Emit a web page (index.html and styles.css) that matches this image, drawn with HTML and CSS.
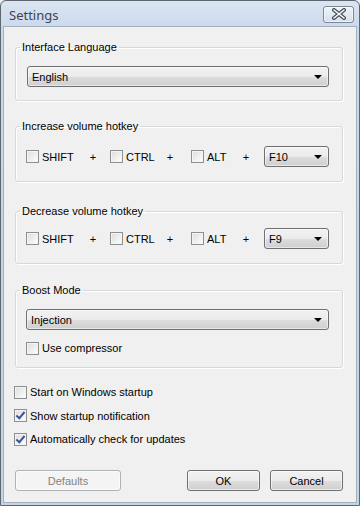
FILE: index.html
```html
<!DOCTYPE html>
<html lang="en">
<head>
    <meta charset="UTF-8">
    <meta name="viewport" content="width=device-width, initial-scale=1.0">
    <title>Settings</title>
    <link rel="stylesheet" href="styles.css">
</head>
<body>
    <div class="window">
        <!-- Title bar with caption and close button -->
        <div class="title-bar">
            <div class="title">Settings</div>
            <div class="close-btn">
                <svg width="18" height="12" viewBox="0 0 18 12">
                    <path d="M4 2 L14 10 M14 2 L4 10" stroke="#4a4f55" stroke-width="4" stroke-linecap="round"/>
                    <path d="M4 2 L14 10 M14 2 L4 10" stroke="#ffffff" stroke-width="1.6" stroke-linecap="round"/>
                </svg>
            </div>
        </div>

        <!-- Client area -->
        <div class="client">
            <fieldset class="group group-lang">
                <legend>Interface Language</legend>
                <div class="combo combo-wide"><span>English</span><i class="arrow"></i></div>
            </fieldset>

            <fieldset class="group group-hotkey group-increase">
                <legend>Increase volume hotkey</legend>
                <div class="hotkey-row">
                    <label class="check key-shift"><span class="box"></span>SHIFT</label>
                    <span class="plus">+</span>
                    <label class="check key-ctrl"><span class="box"></span>CTRL</label>
                    <span class="plus">+</span>
                    <label class="check key-alt"><span class="box"></span>ALT</label>
                    <span class="plus">+</span>
                    <div class="combo combo-key"><span>F10</span><i class="arrow"></i></div>
                </div>
            </fieldset>

            <fieldset class="group group-hotkey group-decrease">
                <legend>Decrease volume hotkey</legend>
                <div class="hotkey-row">
                    <label class="check key-shift"><span class="box"></span>SHIFT</label>
                    <span class="plus">+</span>
                    <label class="check key-ctrl"><span class="box"></span>CTRL</label>
                    <span class="plus">+</span>
                    <label class="check key-alt"><span class="box"></span>ALT</label>
                    <span class="plus">+</span>
                    <div class="combo combo-key"><span>F9</span><i class="arrow"></i></div>
                </div>
            </fieldset>

            <fieldset class="group group-boost">
                <legend>Boost Mode</legend>
                <div class="combo combo-wide"><span>Injection</span><i class="arrow"></i></div>
                <label class="check compressor"><span class="box"></span>Use compressor</label>
            </fieldset>

            <!-- General options -->
            <div class="options">
                <label class="check"><span class="box"></span>Start on Windows startup</label>
                <label class="check"><span class="box checked"></span>Show startup notification</label>
                <label class="check"><span class="box checked"></span>Automatically check for updates</label>
            </div>

            <!-- Dialog buttons -->
            <div class="buttons">
                <div class="btn btn-disabled">Defaults</div>
                <div class="btn-right">
                    <div class="btn">OK</div>
                    <div class="btn">Cancel</div>
                </div>
            </div>
        </div>
    </div>
</body>
</html>
```

FILE: styles.css
```css
body {
    margin: 0;
    padding: 0;
    font-family: "Liberation Sans", Arial, sans-serif;
    font-size: 11px;
    color: #000000;
    background-color: #f0f0f0;
}

/* Window frame */
.window {
    width: 360px;
    height: 506px;
    box-sizing: border-box;
    border: 1px solid #5e6670;
    border-radius: 6px 6px 0 0;
    background: linear-gradient(#dbe5f2, #c9d8eb 30px, #c3d3e8);
    padding: 0 2px 2px 2px;
    display: flex;
    flex-direction: column;
}

/* Title bar */
.title-bar {
    height: 25px;
    display: flex;
    justify-content: space-between;
    align-items: center;
    flex-shrink: 0;
}

.title {
    font-family: "Noto Sans", sans-serif;
    font-size: 13px;
    color: #3c4650;
    padding-left: 6px;
    padding-top: 2px;
}

.close-btn {
    width: 29px;
    height: 15px;
    margin-right: 3px;
    margin-top: 1px;
    border: 1px solid #7b8796;
    border-radius: 3px;
    background: linear-gradient(#eef3f9, #d5e0ee);
    box-shadow: inset 0 0 0 1px rgba(255, 255, 255, 0.6);
    display: flex;
    align-items: center;
    justify-content: center;
}

/* Client area */
.client {
    flex: 1;
    background-color: #f0f0f0;
    border: 1px solid #a3afbc;
    padding: 12px 13px 0 11px;
    display: flex;
    flex-direction: column;
}

/* Group boxes */
.group {
    margin: 0 0 17px 0;
    padding: 11px 13px 13px 10px;
    border: 1px solid #d5d9dc;
    border-radius: 3px;
    box-shadow: inset 1px 1px 0 #ffffff, 1px 1px 0 #ffffff;
}

.group legend {
    padding: 0 2px;
    margin-left: -6px;
    line-height: 16px;
}

.group-lang .combo {
    margin-left: 1px;
}

.group-hotkey {
    padding-top: 12px;
    padding-bottom: 14px;
}

.group-increase {
    margin-bottom: 21px;
}

.group-decrease {
    padding-top: 9px;
    margin-bottom: 18px;
}

.group-boost {
    padding-bottom: 11px;
    margin-bottom: 16px;
}

/* Combo boxes */
.combo {
    height: 21px;
    box-sizing: border-box;
    border: 1px solid #707070;
    border-radius: 3px;
    background: linear-gradient(#f2f2f2, #ebebeb 50%, #dddddd 51%, #cfcfcf);
    box-shadow: inset 0 0 0 1px rgba(255, 255, 255, 0.5);
    display: flex;
    align-items: center;
    justify-content: space-between;
    padding: 0 6px 0 4px;
}

.arrow {
    width: 0;
    height: 0;
    border-left: 4px solid transparent;
    border-right: 4px solid transparent;
    border-top: 4px solid #000000;
}

.combo-key {
    width: 65px;
    margin-left: 9px;
}

/* Checkboxes */
.check {
    display: flex;
    align-items: center;
    height: 16px;
}

.box {
    width: 13px;
    height: 13px;
    box-sizing: border-box;
    border: 1px solid #8e8f8f;
    background: linear-gradient(135deg, #dcdcdc, #ffffff);
    box-shadow: inset 0 0 0 1px #f4f4f4;
    margin-right: 3px;
    flex-shrink: 0;
    position: relative;
}

.box.checked::after {
    content: "";
    position: absolute;
    left: 3px;
    top: 0px;
    width: 3px;
    height: 7px;
    border-right: 2px solid #3d5496;
    border-bottom: 2px solid #3d5496;
    transform: rotate(40deg);
}

/* Hotkey rows */
.hotkey-row {
    display: flex;
    align-items: center;
}

.plus {
    width: 18px;
    text-align: center;
}

.key-shift {
    width: 58px;
}

.key-ctrl {
    width: 51px;
    margin-left: 8px;
}

.key-alt {
    width: 46px;
    margin-left: 12px;
}

.compressor {
    margin-top: 10px;
}

/* General options */
.options {
    display: flex;
    flex-direction: column;
    gap: 7.5px;
    margin-left: -1px;
}

/* Buttons */
.buttons {
    display: flex;
    justify-content: space-between;
    margin-top: 23px;
}

.btn-right {
    display: flex;
    gap: 10px;
}

.btn {
    width: 73px;
    height: 21px;
    box-sizing: border-box;
    border: 1px solid #707070;
    border-radius: 3px;
    background: linear-gradient(#f2f2f2, #ebebeb 50%, #dddddd 51%, #cfcfcf);
    box-shadow: inset 0 0 0 1px rgba(255, 255, 255, 0.6);
    display: flex;
    align-items: center;
    justify-content: center;
}

.btn-disabled {
    width: 106px;
    border-color: #adb2b5;
    background: #f4f4f4;
    color: #838383;
}
```
